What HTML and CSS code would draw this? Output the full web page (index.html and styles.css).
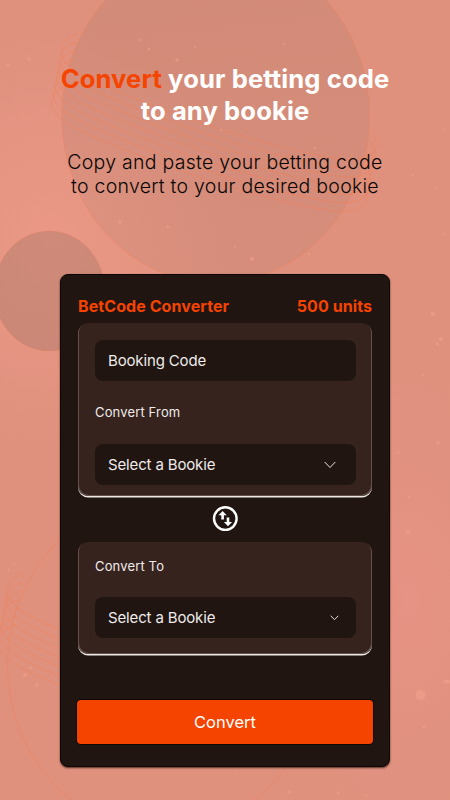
FILE: index.html
```html
<!DOCTYPE html>
<html lang="en">
<head>
<meta charset="utf-8">
<title>BetCode Converter</title>
<link rel="stylesheet" href="styles.css">
</head>
<body>
<svg class="backdrop" viewBox="0 0 450 800" aria-hidden="true">
  <defs>
    <linearGradient id="disc" x1="0.4" y1="0" x2="0.5" y2="1">
      <stop offset="0" stop-color="#99705f" stop-opacity=".18"/>
      <stop offset="1" stop-color="#a87869" stop-opacity=".16"/>
    </linearGradient>
    <path id="ring" d="M78 34C66 36 59 48 62 56C67 69 90 80 117 91C180 118 270 148 340 159C368 163 384 152 373 134"/>
    <g id="rings" fill="none" stroke="#f47d50" stroke-opacity=".6" stroke-width=".75">
      <use href="#ring"/>
      <use href="#ring" x="-1.6" y="8.6"/>
      <use href="#ring" x="-3.2" y="17.2"/>
      <use href="#ring" x="-4.8" y="25.8"/>
      <use href="#ring" x="-6.4" y="34.4"/>
      <use href="#ring" x="-8" y="43"/>
      <use href="#ring" x="-9.6" y="51.6"/>
    </g>
  </defs>
  <ellipse cx="215.7" cy="116.3" rx="154" ry="166.9" fill="url(#disc)" stroke="#ef8058" stroke-opacity=".6" stroke-width=".8"/>
  <ellipse cx="49.3" cy="291" rx="55.3" ry="60" fill="#9d7265" fill-opacity=".36" stroke="#e17e5c" stroke-opacity=".4" stroke-width=".7"/>
  <ellipse cx="163" cy="665" rx="155.5" ry="167" fill="none" stroke="#f47d50" stroke-opacity=".65" stroke-width=".8"/>
  <use href="#rings"/>
  <use href="#rings" x="-54" y="540"/>
  <g fill="#f1a28e" fill-opacity=".6">
    <circle cx="420.5" cy="695" r="5"/><ellipse cx="447" cy="681.5" rx="3" ry="2"/>
    <circle cx="433" cy="314" r="2.3"/><circle cx="441" cy="339" r="2"/><circle cx="437.5" cy="344" r="1.5"/>
    <circle cx="423" cy="375" r="1"/><circle cx="438" cy="443" r="1.6"/><circle cx="408" cy="531.5" r="1.9"/>
    <circle cx="409" cy="497" r="1.2"/><circle cx="398" cy="453" r="1"/><circle cx="402" cy="632" r="1"/>
    <circle cx="424" cy="727" r="1.2"/><circle cx="289" cy="792" r="1.6"/><circle cx="338" cy="793" r="1.5"/>
    <circle cx="366" cy="795" r="1"/><circle cx="237" cy="773" r="1"/><circle cx="31" cy="668" r="1.6"/>
    <circle cx="25" cy="675" r="2"/><circle cx="37" cy="685" r="1.7"/><circle cx="14" cy="564" r="1.1"/>
    <circle cx="9" cy="570" r="1.1"/><circle cx="177" cy="60" r="1.7"/><circle cx="149" cy="49" r="1.4"/>
    <circle cx="140" cy="40" r="1.2"/><circle cx="284" cy="44" r="1"/><circle cx="195" cy="47" r=".9"/>
    <circle cx="8" cy="65" r="1.4"/><circle cx="29" cy="59" r="1.6"/><circle cx="52" cy="118" r="1"/>
    <circle cx="120" cy="222" r="1.8"/><circle cx="168" cy="227" r="1.4"/><circle cx="252" cy="259" r="2"/>
    <circle cx="235" cy="247" r="1"/><circle cx="309" cy="254" r="1.2"/><circle cx="437" cy="188" r="1.1"/>
    <circle cx="413" cy="175" r="1"/><circle cx="444" cy="234" r="1.1"/><circle cx="444" cy="130" r="1"/>
    <circle cx="315" cy="148" r="1.2"/><circle cx="221" cy="130" r="1.1"/>
  </g>
</svg>
<main class="page">
  <h1 class="title"><span class="title-line"><span class="accent">Convert</span> your betting code</span><span class="title-line">to any bookie</span></h1>
  <p class="lead"><span class="lead-line">Copy and paste your betting code</span><span class="lead-line">to convert to your desired bookie</span></p>
  <section class="card">
    <header class="card-head"><span>BetCode Converter</span><span>500 units</span></header>
    <div class="panel from">
      <div class="field"><span>Booking Code</span></div>
      <div class="label">Convert From</div>
      <div class="field"><span>Select a Bookie</span>
        <svg class="chev" width="12" height="8" viewBox="0 0 12 8"><path d="M.7 1L6 6.5L11.3 1"/></svg></div>
    </div>
    <svg class="swap" width="26" height="26" viewBox="0 0 26 26">
      <circle cx="13.3" cy="12.6" r="11.3" fill="none" stroke="#fff" stroke-width="2.4"/>
      <path fill="#fff" d="M10.6 4.9L14.7 9.2H11.9V13.6H9.3V9.2H6.5ZM16 20.3L11.9 16H14.7V11.6H17.3V16H20.1Z"/>
    </svg>
    <div class="panel to">
      <div class="label">Convert To</div>
      <div class="field"><span>Select a Bookie</span>
        <svg class="chev" width="9" height="6" viewBox="0 0 9 6"><path d="M.7 .8L4.5 4.6L8.3 .8"/></svg></div>
    </div>
    <button class="submit">Convert</button>
  </section>
</main>
</body>
</html>
```
FILE: styles.css
```css
* { box-sizing: border-box; }
body {
  margin: 0;
  width: 450px;
  height: 800px;
  overflow: hidden;
  position: relative;
  font-family: Inter, "Liberation Sans", sans-serif;
  background:
    radial-gradient(ellipse 190px 210px at 50px 240px, #eb9886 0%, rgba(235,152,134,0) 100%),
    radial-gradient(ellipse 120px 230px at 410px 600px, #e69284 0%, rgba(230,146,132,0) 100%),
    #df917e;
}
.backdrop { position: absolute; inset: 0; width: 450px; height: 800px; }
.page {
  position: relative;
  display: flex;
  flex-direction: column;
  align-items: center;
  padding-top: 63px;
}
.title { margin: 0; font-size: 25.6px; letter-spacing: .1px; line-height: 32px; font-weight: 700; color: #fff; text-align: center; }
.title-line, .lead-line { display: block; white-space: nowrap; }
.accent { color: #f54400; }
.lead { margin: 23px 0 0; font-size: 19.5px; letter-spacing: .26px; line-height: 24px; font-weight: 300; color: #080605; text-align: center; }
.card {
  width: 330px;
  height: 493px;
  margin-top: 76px;
  padding: 22px 18px 0;
  display: flex;
  flex-direction: column;
  border-radius: 8px;
  background: #201511;
  border: 1px solid #0d0706;
  box-shadow: 0 1px 2px rgba(40,15,8,.75);
}
.card-head {
  display: flex;
  justify-content: space-between;
  height: 26px;
  font-size: 16px;
  letter-spacing: .08px;
  line-height: 18px;
  font-weight: 700;
  color: #f54400;
  white-space: nowrap;
  margin: 0 -1px;
}
.panel {
  margin: 0 -1px;
  padding: 17px 17px 0;
  border-radius: 10px;
  background: #37231e;
  box-shadow: inset 1px -1px 0 #61504b, inset -1px -1px 0 #61504b, 0 1.5px 0 #eee9e6;
  color: #eeebea;
}
.from { height: 173px; }
.to { height: 112px; }
.field {
  height: 41px;
  margin-right: -1px;
  padding: 0 20px 0 13px;
  display: flex;
  align-items: center;
  justify-content: space-between;
  border-radius: 8px;
  background: #201511;
  font-size: 15px;
  letter-spacing: -.15px;
  white-space: nowrap;
}
.label { font-size: 13px; letter-spacing: .15px; line-height: 16px; }
.from .label { margin: 23px 0 24px; }
.to .label { margin: -1px 0 23px; }
.chev { fill: none; stroke: #e8e4e2; stroke-width: 1; }
.to .chev { margin-right: -3px; }
.swap { align-self: center; margin: 10px 0; }
.submit {
  height: 44px;
  margin: 46px -2px 0;
  padding: 0;
  border: 0;
  border-radius: 4px;
  background: #f54400;
  color: #fff;
  font: 400 16.5px/44px Inter, "Liberation Sans", sans-serif;
  box-shadow: 0 0 0 1px #0d0706;
}
```
